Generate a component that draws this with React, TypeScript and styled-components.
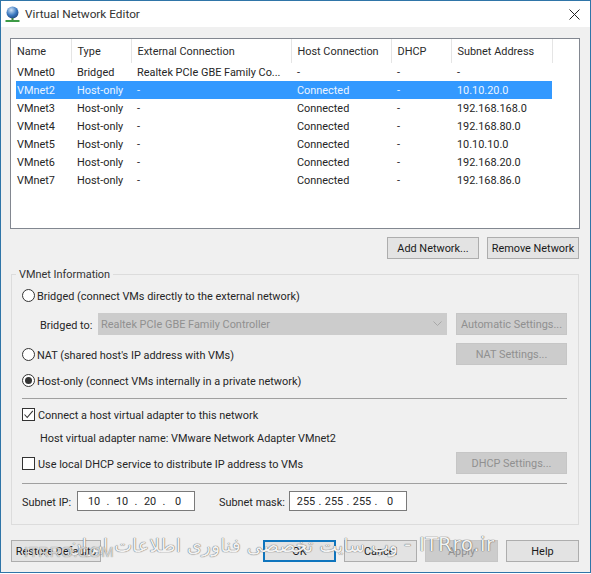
import React from "react";
import styled, { createGlobalStyle } from "styled-components";

const FONT_SIZE = "10.9px";

const Global = createGlobalStyle`
  html, body { margin: 0; padding: 0; background: #fff; }
  body { font-family: Roboto, "Open Sans", sans-serif; font-size: ${FONT_SIZE}; color: #1a1a1a; }
`;

const Win = styled.div`
  position: relative;
  width: 591px;
  height: 574px;
  box-sizing: border-box;
  overflow: hidden;
`;
const Frame = styled.div`
  width: 591px;
  height: 573px;
  box-sizing: border-box;
  border: 1px solid #2f75a8;
  background: #f0f0f0;
  display: flex;
  flex-direction: column;
`;
const TitleBar = styled.div`
  height: 26px;
  background: #fff;
  display: flex;
  align-items: center;
  padding-left: 4px;
  gap: 4px;
  flex: none;
`;
const Title = styled.div`
  flex: 1;
  font-size: 11.8px;
  color: #333;
`;
const Close = styled.div`
  width: 46px;
  height: 26px;
  display: flex;
  align-items: center;
  justify-content: center;
  margin-right: -7px;
`;
const Body = styled.div`
  padding: 11px 11px 0 9px;
  display: flex;
  flex-direction: column;
  flex: 1;
`;
const ListBox = styled.div`
  height: 191px;
  box-sizing: border-box;
  margin-right: -1px;
  background: #fff;
  border: 1px solid #828790;
`;
const Table = styled.table`
  border-collapse: collapse;
  table-layout: fixed;
  width: 536px;
  margin-left: 5px;
`;
const Th = styled.th<{ $w: number }>`
  width: ${(p) => p.$w}px;
  height: 24px;
  padding: 0 0 0 6px;
  box-sizing: border-box;
  font-weight: 400;
  text-align: left;
  font-size: ${FONT_SIZE};
  color: #2a2a2a;
  border-right: 1px solid #e5e5e5;
  &:first-child { padding-left: 1px; }
`;
const Tr = styled.tr<{ $sel?: boolean }>`
  background: ${(p) => (p.$sel ? "#3399ff" : "transparent")};
  color: ${(p) => (p.$sel ? "#eaf4ff" : "#262626")};
`;
const Td = styled.td`
  height: 18px;
  padding: 1px 0 0 6px;
  box-sizing: border-box;
  font-size: ${FONT_SIZE};
  white-space: nowrap;
  overflow: hidden;
  line-height: 17px;
  &:first-child { padding-left: 1px; }
`;
const ListActions = styled.div`
  display: flex;
  justify-content: flex-end;
  gap: 8px;
  margin-top: 8px;
`;
const Btn = styled.div<{ $w: number; $off?: boolean; $def?: boolean }>`
  width: ${(p) => p.$w}px;
  height: 22px;
  box-sizing: border-box;
  display: flex;
  align-items: center;
  justify-content: center;
  font-size: ${FONT_SIZE};
  flex: none;
  background: ${(p) => (p.$off ? "#cccccc" : "#e3e3e3")};
  color: ${(p) => (p.$off ? "#909090" : "#1a1a1a")};
  border: ${(p) =>
    p.$def ? "2px solid #0f75bd" : p.$off ? "1px solid #c6c6c6" : "1px solid #adadad"};
`;
const Group = styled.fieldset`
  margin: 8px 0 0 1px;
  padding: 0 11px 0 10px;
  height: 258px;
  box-sizing: border-box;
  border: 1px solid #dcdcdc;
  min-width: 0;
`;
const Legend = styled.legend`
  margin: 0 0 -1px -6px;
  padding: 1px 3px 0;
  font-size: ${FONT_SIZE};
  line-height: 14px;
  color: #333;
`;
const Row = styled.div<{ $top: number; $h?: number; $indent?: number }>`
  display: flex;
  align-items: center;
  height: ${(p) => p.$h ?? 22}px;
  margin-top: ${(p) => p.$top}px;
  padding-left: ${(p) => p.$indent ?? 0}px;
`;
const Spring = styled.div`
  flex: 1;
`;
const Radio = styled.span<{ $on?: boolean }>`
  width: 13px;
  height: 13px;
  box-sizing: border-box;
  border-radius: 50%;
  border: 1px solid #333;
  background: #fff;
  margin-right: 2px;
  flex: none;
  display: flex;
  align-items: center;
  justify-content: center;
  &::after {
    content: "";
    width: 7px;
    height: 7px;
    border-radius: 50%;
    background: ${(p) => (p.$on ? "#333" : "transparent")};
  }
`;
const Check = styled.span`
  width: 13px;
  height: 13px;
  box-sizing: border-box;
  border: 1px solid #333;
  background: #fff;
  margin-right: 3px;
  flex: none;
  display: flex;
`;
const Label = styled.span<{ $w?: number; $left?: number }>`
  font-size: ${FONT_SIZE};
  color: #262626;
  white-space: nowrap;
  flex: none;
  padding-top: 2px;
  ${(p) => (p.$w ? `width: ${p.$w}px;` : "")}
  margin-left: ${(p) => p.$left ?? 0}px;
`;
const Combo = styled.div`
  width: 349px;
  height: 22px;
  box-sizing: border-box;
  background: #cccccc;
  color: #909090;
  font-size: ${FONT_SIZE};
  display: flex;
  align-items: center;
  padding: 0 5px 0 3px;
  margin-left: 5px;
`;
const ComboText = styled.span`
  flex: 1;
`;
const Sep = styled.div<{ $top: number }>`
  height: 1px;
  background: #a0a0a0;
  margin-top: ${(p) => p.$top}px;
`;
const IpBox = styled.div`
  width: 118px;
  height: 20px;
  box-sizing: border-box;
  padding: 1px 0 0 9px;
  background: #fff;
  border: 1px solid #7a7a7a;
  display: grid;
  grid-template-columns: repeat(7, 14px);
  font-size: ${FONT_SIZE};
  color: #262626;
  align-items: center;
  justify-items: center;
  margin-left: 5px;
  flex: none;
`;
const Footer = styled.div`
  display: flex;
  margin-top: 15px;
  margin-left: 1px;
  gap: 8px;
`;
const WaterFa = styled.div`
  position: absolute;
  left: 98px;
  top: 533px;
  width: 300px;
  direction: rtl;
  text-align: center;
  font-family: "DejaVu Sans", sans-serif;
  font-size: 19px;
  line-height: 24px;
  white-space: nowrap;
  color: #f2f2f2;
  text-shadow: 0 0 1px #555, 0 0 1px #888;
`;
const WaterEn = styled.div`
  position: absolute;
  left: 419px;
  top: 532px;
  font-family: "DejaVu Sans", sans-serif;
  font-size: 20px;
  line-height: 24px;
  letter-spacing: 0.5px;
  white-space: nowrap;
  color: #f2f2f2;
  text-shadow: 0 0 1px #444, 0 0 1px #777;
`;
const WaterDash = styled(WaterEn)`
  left: 404px;
`;
const WaterSite = styled.div`
  position: absolute;
  left: 24px;
  top: 543px;
  font-family: "Liberation Sans", sans-serif;
  font-size: 15px;
  line-height: 18px;
  letter-spacing: 0.5px;
  white-space: nowrap;
  color: rgba(240, 240, 240, 0.75);
  text-shadow: 0 0 1px #666;
`;

const cols: [string, number][] = [
  ["Name", 55], ["Type", 60], ["External Connection", 160],
  ["Host Connection", 100], ["DHCP", 60], ["Subnet Address", 101],
];
const rows = [
  ["VMnet0", "Bridged", "Realtek PCIe GBE Family Co...", "-", "-", "-"],
  ["VMnet2", "Host-only", "-", "Connected", "-", "10.10.20.0"],
  ["VMnet3", "Host-only", "-", "Connected", "-", "192.168.168.0"],
  ["VMnet4", "Host-only", "-", "Connected", "-", "192.168.80.0"],
  ["VMnet5", "Host-only", "-", "Connected", "-", "10.10.10.0"],
  ["VMnet6", "Host-only", "-", "Connected", "-", "192.168.20.0"],
  ["VMnet7", "Host-only", "-", "Connected", "-", "192.168.86.0"],
];

const Ip = ({ v }: { v: string[] }) => (
  <IpBox>
    <span>{v[0]}</span>
    <span>.</span>
    <span>{v[1]}</span>
    <span>.</span>
    <span>{v[2]}</span>
    <span>.</span>
    <span>{v[3]}</span>
  </IpBox>
);

export default function App() {
  return (
    <Win>
      <Global />
      <Frame>
        <TitleBar>
          <svg width="16" height="18" viewBox="0 0 16 18">
            <defs>
              <radialGradient id="g" cx="0.4" cy="0.3" r="0.8">
                <stop offset="0" stopColor="#cfe2f5" />
                <stop offset="0.55" stopColor="#3a78c0" />
                <stop offset="1" stopColor="#1c3c70" />
              </radialGradient>
            </defs>
            <circle cx="7.5" cy="7.5" r="6" fill="url(#g)" />
            <rect x="6.5" y="13" width="2" height="2" fill="#3f7f3f" />
            <rect x="0.5" y="15" width="14" height="2" fill="#3d9a45" />
          </svg>
          <Title>Virtual Network Editor</Title>
          <Close>
            <svg width="11" height="11" viewBox="0 0 11 11">
              <path d="M0.5 0.5 L10.5 10.5 M10.5 0.5 L0.5 10.5" stroke="#222" strokeWidth="1" fill="none" />
            </svg>
          </Close>
        </TitleBar>
        <Body>
          <ListBox>
            <Table>
              <thead>
                <tr>
                  {cols.map(([c, w]) => (
                    <Th key={c} $w={w}>{c}</Th>
                  ))}
                </tr>
              </thead>
              <tbody>
                {rows.map((r) => (
                  <Tr key={r[0]} $sel={r[0] === "VMnet2"}>
                    {r.map((c, i) => (
                      <Td key={i}>{c}</Td>
                    ))}
                  </Tr>
                ))}
              </tbody>
            </Table>
          </ListBox>
          <ListActions>
            <Btn $w={92}>Add Network...</Btn>
            <Btn $w={92}>Remove Network</Btn>
          </ListActions>
          <Group>
            <Legend>VMnet Information</Legend>
            <Row $top={3}>
              <Radio />
              <Label>Bridged (connect VMs directly to the external network)</Label>
            </Row>
            <Row $top={7} $indent={18}>
              <Label $w={53}>Bridged to:</Label>
              <Combo>
                <ComboText>Realtek PCIe GBE Family Controller</ComboText>
                <svg width="9" height="6" viewBox="0 0 9 6">
                  <path d="M0.5 0.5 L4.5 4.5 L8.5 0.5" stroke="#a8a8a8" fill="none" />
                </svg>
              </Combo>
              <Spring />
              <Btn $w={111} $off>Automatic Settings...</Btn>
            </Row>
            <Row $top={8}>
              <Radio />
              <Label>NAT (shared host's IP address with VMs)</Label>
              <Spring />
              <Btn $w={111} $off>NAT Settings...</Btn>
            </Row>
            <Row $top={4}>
              <Radio $on />
              <Label>Host-only (connect VMs internally in a private network)</Label>
            </Row>
            <Sep $top={7} />
            <Row $top={4}>
              <Check>
                <svg width="11" height="11" viewBox="0 0 11 11">
                  <path d="M1.5 5.5 L4.2 8.5 L9.8 1.8" stroke="#333" strokeWidth="1.1" fill="none" />
                </svg>
              </Check>
              <Label>Connect a host virtual adapter to this network</Label>
            </Row>
            <Row $top={1} $indent={18}>
              <Label>Host virtual adapter name: VMware Network Adapter VMnet2</Label>
            </Row>
            <Row $top={4}>
              <Check />
              <Label>Use local DHCP service to distribute IP address to VMs</Label>
              <Spring />
              <Btn $w={111} $off>DHCP Settings...</Btn>
            </Row>
            <Sep $top={9} />
            <Row $top={7} $h={20}>
              <Label $w={50}>Subnet IP:</Label>
              <Ip v={["10", "10", "20", "0"]} />
              <Label $w={65} $left={24}>Subnet mask:</Label>
              <Ip v={["255", "255", "255", "0"]} />
            </Row>
          </Group>
          <Footer>
            <Btn $w={90}>Restore Defaults</Btn>
            <Spring />
            <Btn $w={73} $def>OK</Btn>
            <Btn $w={73}>Cancel</Btn>
            <Btn $w={73} $off>Apply</Btn>
            <Btn $w={73}>Help</Btn>
          </Footer>
        </Body>
      </Frame>
      <WaterFa>وب سایت تخصصی فناوری اطلاعات ایران</WaterFa>
      <WaterDash>-</WaterDash>
      <WaterEn>ITRro.ir</WaterEn>
      <WaterSite>ITRRO.COM</WaterSite>
    </Win>
  );
}
